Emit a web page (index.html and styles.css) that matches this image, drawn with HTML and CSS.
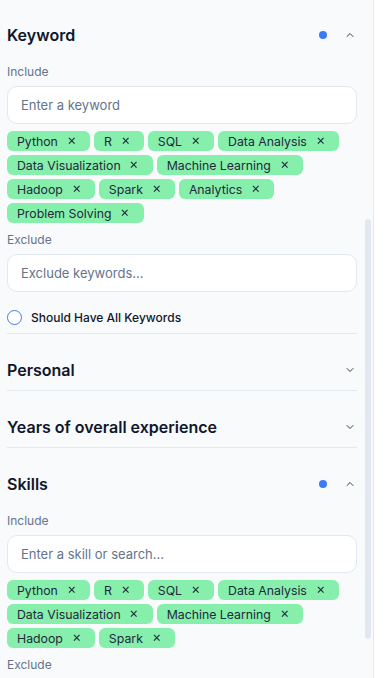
FILE: index.html
```html
<!DOCTYPE html>
<html lang="en">
<head>
  <meta charset="UTF-8">
  <title>Filters</title>
  <meta name="viewport" content="width=device-width, initial-scale=1.0">
  <link rel="stylesheet" href="styles.css">
</head>
<body>

  <aside class="panel">
    <div class="panel-content">

      <section class="filter first">
        <div class="filter-head">
          <h2>Keyword</h2>
          <div class="filter-icons">
            <span class="dot"></span>
            <svg class="chev" viewBox="0 0 14 14"><polyline points="4,8.5 7,5.5 10,8.5"/></svg>
          </div>
        </div>
        <div class="filter-body">
          <label class="field-label">Include</label>
          <input class="field-input" placeholder="Enter a keyword">
          <div class="tags">
            <span class="tag">Python<span class="tag-x"><svg viewBox="0 0 8 8"><path d="M1 1L7 7M7 1L1 7"/></svg></span></span>
            <span class="tag">R<span class="tag-x"><svg viewBox="0 0 8 8"><path d="M1 1L7 7M7 1L1 7"/></svg></span></span>
            <span class="tag">SQL<span class="tag-x"><svg viewBox="0 0 8 8"><path d="M1 1L7 7M7 1L1 7"/></svg></span></span>
            <span class="tag">Data Analysis<span class="tag-x"><svg viewBox="0 0 8 8"><path d="M1 1L7 7M7 1L1 7"/></svg></span></span>
            <span class="tag">Data Visualization<span class="tag-x"><svg viewBox="0 0 8 8"><path d="M1 1L7 7M7 1L1 7"/></svg></span></span>
            <span class="tag">Machine Learning<span class="tag-x"><svg viewBox="0 0 8 8"><path d="M1 1L7 7M7 1L1 7"/></svg></span></span>
            <span class="tag">Hadoop<span class="tag-x"><svg viewBox="0 0 8 8"><path d="M1 1L7 7M7 1L1 7"/></svg></span></span>
            <span class="tag">Spark<span class="tag-x"><svg viewBox="0 0 8 8"><path d="M1 1L7 7M7 1L1 7"/></svg></span></span>
            <span class="tag">Analytics<span class="tag-x"><svg viewBox="0 0 8 8"><path d="M1 1L7 7M7 1L1 7"/></svg></span></span>
            <span class="tag">Problem Solving<span class="tag-x"><svg viewBox="0 0 8 8"><path d="M1 1L7 7M7 1L1 7"/></svg></span></span>
          </div>
          <label class="field-label spaced">Exclude</label>
          <input class="field-input" placeholder="Exclude keywords...">
          <label class="check"><span class="radio"></span>Should Have All Keywords</label>
        </div>
      </section>

      <section class="filter">
        <div class="filter-head">
          <h2>Personal</h2>
          <div class="filter-icons">
            <svg class="chev" viewBox="0 0 14 14"><polyline points="4,5.5 7,8.5 10,5.5"/></svg>
          </div>
        </div>
      </section>

      <section class="filter">
        <div class="filter-head">
          <h2>Years of overall experience</h2>
          <div class="filter-icons">
            <svg class="chev" viewBox="0 0 14 14"><polyline points="4,5.5 7,8.5 10,5.5"/></svg>
          </div>
        </div>
      </section>

      <section class="filter">
        <div class="filter-head">
          <h2>Skills</h2>
          <div class="filter-icons">
            <span class="dot"></span>
            <svg class="chev" viewBox="0 0 14 14"><polyline points="4,8.5 7,5.5 10,8.5"/></svg>
          </div>
        </div>
        <div class="filter-body">
          <label class="field-label">Include</label>
          <input class="field-input" placeholder="Enter a skill or search...">
          <div class="tags">
            <span class="tag">Python<span class="tag-x"><svg viewBox="0 0 8 8"><path d="M1 1L7 7M7 1L1 7"/></svg></span></span>
            <span class="tag">R<span class="tag-x"><svg viewBox="0 0 8 8"><path d="M1 1L7 7M7 1L1 7"/></svg></span></span>
            <span class="tag">SQL<span class="tag-x"><svg viewBox="0 0 8 8"><path d="M1 1L7 7M7 1L1 7"/></svg></span></span>
            <span class="tag">Data Analysis<span class="tag-x"><svg viewBox="0 0 8 8"><path d="M1 1L7 7M7 1L1 7"/></svg></span></span>
            <span class="tag">Data Visualization<span class="tag-x"><svg viewBox="0 0 8 8"><path d="M1 1L7 7M7 1L1 7"/></svg></span></span>
            <span class="tag">Machine Learning<span class="tag-x"><svg viewBox="0 0 8 8"><path d="M1 1L7 7M7 1L1 7"/></svg></span></span>
            <span class="tag">Hadoop<span class="tag-x"><svg viewBox="0 0 8 8"><path d="M1 1L7 7M7 1L1 7"/></svg></span></span>
            <span class="tag">Spark<span class="tag-x"><svg viewBox="0 0 8 8"><path d="M1 1L7 7M7 1L1 7"/></svg></span></span>
          </div>
          <label class="field-label spaced">Exclude</label>
          <input class="field-input" placeholder="Exclude skills...">
        </div>
      </section>

    </div>
    <div class="scroll-track"><div class="scroll-thumb"></div></div>
  </aside>

</body>
</html>
```

FILE: styles.css
```css
body {
  margin: 0;
  background: #fff;
  font-family: Inter, "Noto Sans", sans-serif;
  color: #0f172a;
  height: 678px;
  overflow: hidden;
}

.panel {
  width: 373px;
  height: 678px;
  display: flex;
  background: #f8fafc;
  border-right: 1px solid #e2e8f0;
  overflow: hidden;
}

.panel-content {
  width: 350px;
  padding-left: 7px;
  flex-shrink: 0;
}

.filter {
  padding: 24px 0 8px;
  border-bottom: 1px solid #e2e8f0;
}

.filter.first {
  padding-top: 23px;
}

.filter-head {
  display: flex;
  align-items: center;
  justify-content: space-between;
  height: 24px;
}

.filter-head h2 {
  margin: 0;
  font-size: 16px;
  font-weight: 600;
  line-height: 24px;
  color: #0f172a;
}

.filter-icons {
  display: flex;
  align-items: center;
  gap: 16px;
}

.dot {
  width: 8px;
  height: 8px;
  border-radius: 50%;
  background: #3b7bf6;
}

.chev {
  width: 14px;
  height: 14px;
  fill: none;
  stroke: #334155;
  stroke-width: 1;
  stroke-linecap: round;
  stroke-linejoin: round;
}

.filter-body {
  display: flex;
  flex-direction: column;
  padding-top: 17px;
}

.field-label {
  font-size: 12px;
  line-height: 16px;
  color: #64748b;
}

.field-label.spaced {
  margin-top: 9px;
}

.field-input {
  margin-top: 6px;
  height: 38px;
  box-sizing: border-box;
  border: 1px solid #e2e8f0;
  border-radius: 10px;
  background: #fff;
  padding: 0 13px;
  font-family: inherit;
  font-size: 13px;
  color: #0f172a;
  outline: none;
}

.field-input::placeholder {
  color: #64748b;
}

.tags {
  display: flex;
  flex-wrap: wrap;
  gap: 4px;
  margin-top: 7px;
}

.tag {
  display: inline-flex;
  align-items: center;
  height: 20px;
  padding: 0 10px;
  border-radius: 6px;
  background: #86efac;
  font-size: 12.3px;
  color: #1e293b;
}

.tag-x {
  display: inline-flex;
  align-items: center;
  justify-content: center;
  width: 17px;
  margin-left: 5px;
}

.tag-x svg {
  width: 7.5px;
  height: 7.5px;
  stroke: #1e293b;
  stroke-width: 1.2;
  fill: none;
}

.check {
  display: flex;
  align-items: center;
  gap: 9px;
  margin-top: 17px;
  height: 16px;
  font-size: 12px;
  font-weight: 500;
  color: #0f172a;
}

.radio {
  width: 13px;
  height: 13px;
  border: 1.5px solid #3b7bf6;
  border-radius: 50%;
  background: #fff;
}

.scroll-track {
  flex: 1;
  padding-left: 8px;
}

.scroll-thumb {
  width: 6px;
  height: 420px;
  margin-top: 219px;
  border-radius: 4px;
  background: #e2e8f0;
}
```
